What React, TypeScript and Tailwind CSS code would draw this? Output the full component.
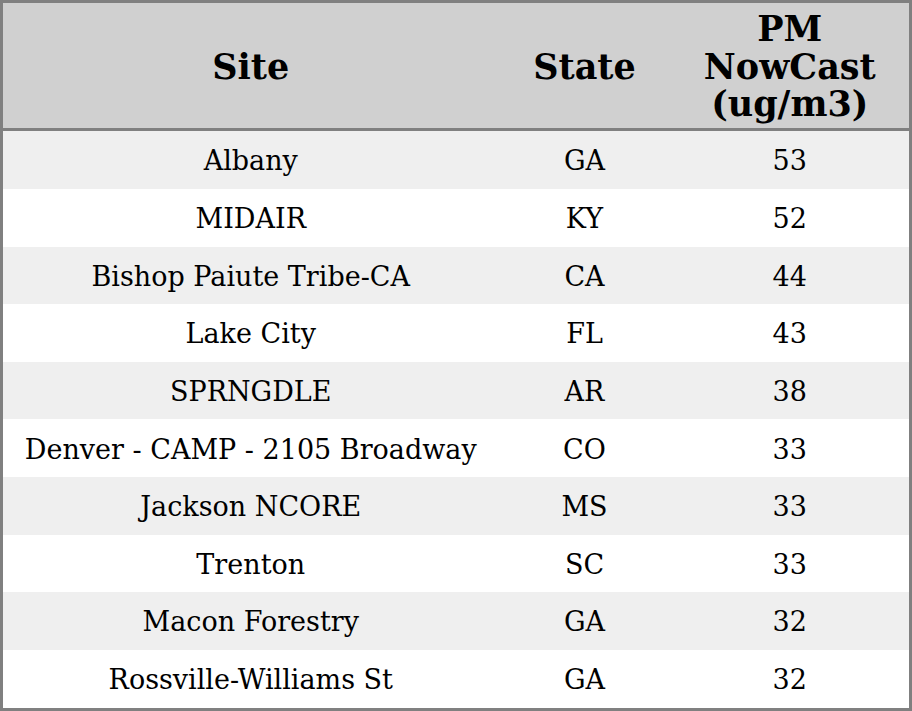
const rows: [string, string, number][] = [
  ['Albany', 'GA', 53],
  ['MIDAIR', 'KY', 52],
  ['Bishop Paiute Tribe-CA', 'CA', 44],
  ['Lake City', 'FL', 43],
  ['SPRNGDLE', 'AR', 38],
  ['Denver - CAMP - 2105 Broadway', 'CO', 33],
  ['Jackson NCORE', 'MS', 33],
  ['Trenton', 'SC', 33],
  ['Macon Forestry', 'GA', 32],
  ['Rossville-Williams St', 'GA', 32],
]

export default function App() {
  return (
    <div className="w-[912px] h-[711px] bg-white font-['DejaVu_Serif',serif] text-black">
      <table className="w-full h-full border-collapse border-[3px] border-[#808080] table-fixed">
        <colgroup>
          <col className="w-[497px]" />
          <col className="w-[172px]" />
          <col />
        </colgroup>
        <thead>
          <tr className="bg-[#d0d0d0] h-[128px] border-b-[3px] border-[#808080]">
            <th className="text-[35px] font-bold leading-[37.5px] text-center p-0 pt-[2px]">Site</th>
            <th className="text-[35px] font-bold leading-[37.5px] text-center p-0 pt-[2px]">State</th>
            <th className="text-[35px] font-bold leading-[37.5px] text-center p-0 pt-[2px]">
              PM
              <br />
              NowCast
              <br />
              (ug/m3)
            </th>
          </tr>
        </thead>
        <tbody>
          {rows.map(([site, state, val], i) => (
            <tr key={site} className={i % 2 === 0 ? 'bg-[#efefef]' : 'bg-white'}>
              <td className="text-[27px] text-center p-0 pt-[3px]">{site}</td>
              <td className="text-[27px] text-center p-0 pt-[3px]">{state}</td>
              <td className="text-[27px] text-center p-0 pt-[3px]">{val}</td>
            </tr>
          ))}
        </tbody>
      </table>
    </div>
  )
}
